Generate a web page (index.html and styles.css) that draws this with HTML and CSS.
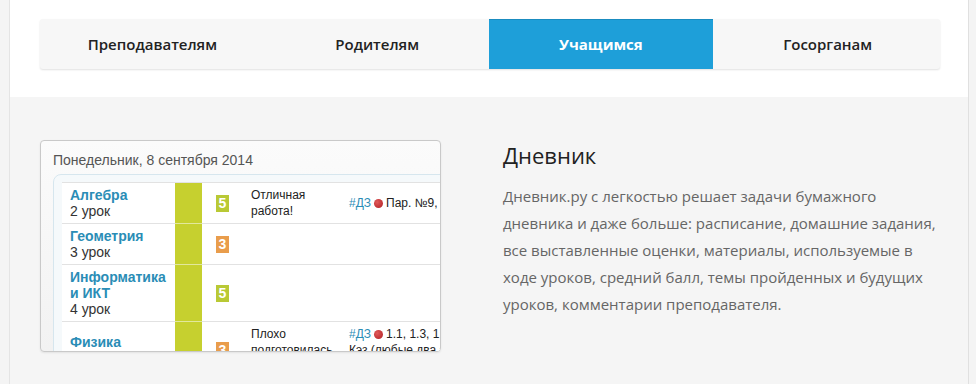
FILE: index.html
```html
<!DOCTYPE html>
<html>
	<head>
		<meta charset="utf-8">
		<title>Дневник.ру</title>
		<link rel="stylesheet" href="styles.css">
	</head>
	<body>
	<div class="page">
		<!--вкладки-->
		<div class="top">
			<ul class="tabs">
				<li>Преподавателям</li>
				<li>Родителям</li>
				<li class="active">Учащимся</li>
				<li>Госорганам</li>
			</ul>
		</div>
		<!--дневник-->
		<div class="feature">
			<div class="shot">
				<div class="shot_date">Понедельник, 8 сентября 2014</div>
				<div class="diary">
					<div class="diary_in">
						<div class="row">
							<div class="subj"><b>Алгебра</b>2 урок</div>
							<div class="bar"></div>
							<div class="mark"><span class="m5">5</span></div>
							<div class="comm">Отличная<br>работа!</div>
							<div class="hw"><span><a>#ДЗ</a><i class="dot"></i>Пар. №9, упр. 1-4</span></div>
						</div>
						<div class="row">
							<div class="subj"><b>Геометрия</b>3 урок</div>
							<div class="bar"></div>
							<div class="mark"><span class="m3">3</span></div>
							<div class="comm"></div>
							<div class="hw"></div>
						</div>
						<div class="row">
							<div class="subj"><b>Информатика<br>и ИКТ</b>4 урок</div>
							<div class="bar"></div>
							<div class="mark"><span class="m5">5</span></div>
							<div class="comm"></div>
							<div class="hw"></div>
						</div>
						<div class="row">
							<div class="subj"><b>Физика</b>5 урок</div>
							<div class="bar"></div>
							<div class="mark"><span class="m3">3</span></div>
							<div class="comm">Плохо<br>подготовилась<br>к уроку</div>
							<div class="hw"><span><a>#ДЗ</a><i class="dot"></i>1.1, 1.3, 1.5</span><span>Кэз (любые два задания)</span><span>на выбор</span></div>
						</div>
					</div>
				</div>
			</div>
			<div class="info">
				<h2>Дневник</h2>
				<p>Дневник.ру с легкостью решает задачи бумажного дневника и даже больше: расписание, домашние задания, все выставленные оценки, материалы, используемые в ходе уроков, средний балл, темы пройденных и будущих уроков, комментарии преподавателя.</p>
			</div>
		</div>
	</div>
	</body>
</html>
```

FILE: styles.css
```css
*{margin:0px;padding:0px;list-style:none;box-sizing:border-box;}
body{background:#f4f4f4;font-family:"Open Sans","Noto Sans",sans-serif;}
.page{margin:0 7px 0 9px;border-left:1px solid #e4e4e4;border-right:1px solid #e0e0e0;background:#f5f5f5;}
/*вкладки*/
.top{background:#fff;height:97px;padding:19px 28px 0 30px;}
.tabs{display:flex;height:50px;background:#f7f7f7;border-radius:3px;box-shadow:0 1px 2px rgba(0,0,0,0.12);}
.tabs li{flex:1;text-align:center;line-height:50px;font-size:15px;font-weight:600;color:#222;}
.tabs .active{background:#1e9fd9;color:#fff;font-weight:700;border-top:1px solid #1a8cc0;line-height:48px;margin-left:-1px;margin-right:2px;}
/*дневник*/
.feature{display:flex;padding:43px 0 40px 30px;}
.shot{width:401px;height:212px;overflow:hidden;border:1px solid #c9c9c9;border-radius:4px;background:linear-gradient(#fbfbfb,#f2f2f2);font-family:"Liberation Sans",Arial,sans-serif;box-shadow:0 1px 2px rgba(0,0,0,0.08);}
.shot_date{padding:10px 0 0 12px;font-size:14px;line-height:18px;color:#555;}
.diary{margin:5px 0 0 12px;width:560px;border:1px solid #d6e6ee;border-radius:8px 0 0 0;background:#f5f9fb;padding:7px 0 0 8px;}
.diary_in{background:#fff;border-top:1px solid #e2e2e2;}
.row{display:grid;grid-template-columns:113px 27px 49px 98px 1fr;}
.row>div{border-bottom:1px solid #e2e2e2;}
.subj{padding:4px 0 4px 8px;font-size:14px;line-height:16px;color:#333;display:flex;flex-direction:column;justify-content:center;}
.subj b{display:block;color:#2a8db6;}
.row .bar{background:#c6d02f;border-bottom-color:#e2e89c;}
.mark{display:flex;align-items:center;padding-left:14px;}
.mark span{display:block;width:13px;height:17px;line-height:17px;text-align:center;font-size:14px;font-weight:700;color:#fff;}
.m5{background:#b9c935;}
.m3{background:#e99d4c;}
.comm,.hw{padding:4px 0;font-size:12px;line-height:16px;color:#222;display:flex;flex-direction:column;justify-content:center;}
.hw{white-space:nowrap;}
.hw a{color:#2a8db6;margin-right:3px;}
.dot{display:inline-block;width:9px;height:9px;border-radius:50%;background:radial-gradient(circle at 35% 35%,#e05a5a,#b01e22);margin-right:3px;vertical-align:-1px;}
.info{margin-left:62px;width:445px;}
.info h2{font-size:22px;line-height:30px;font-weight:400;color:#222;}
.info p{margin-top:13px;font-size:15px;line-height:27px;color:#666;}
```
